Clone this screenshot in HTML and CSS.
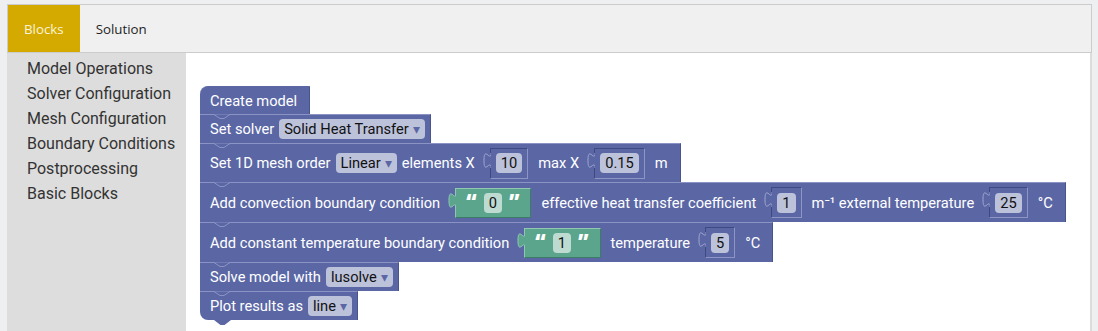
FILE: index.html
```html
<!DOCTYPE html>
<html>
<head>
<meta charset="utf-8">
<link rel="stylesheet" href="styles.css">
</head>
<body>
<div class="app">
  <div class="tabs">
    <div class="tab active">Blocks</div>
    <div class="tab">Solution</div>
  </div>
  <div class="main">
    <ul class="cats">
      <li>Model Operations</li>
      <li>Solver Configuration</li>
      <li>Mesh Configuration</li>
      <li>Boundary Conditions</li>
      <li>Postprocessing</li>
      <li>Basic Blocks</li>
    </ul>
    <div class="workspace">
      <div class="stack">
        <div class="block first h28"><span class="lbl end">Create model</span></div>

        <div class="block h29">
          <svg class="notch" width="18" height="6" viewBox="0 0 18 6"><polyline points="0,0.5 6,4.5 10,4.5 16,0.5"/></svg>
          <span class="lbl">Set solver</span>
          <span class="dd">Solid Heat Transfer<span class="arr">▾</span></span>
        </div>

        <div class="block h39">
          <svg class="notch" width="18" height="6" viewBox="0 0 18 6"><polyline points="0,0.5 6,4.5 10,4.5 16,0.5"/></svg>
          <span class="lbl">Set 1D mesh order</span>
          <span class="dd">Linear<span class="arr">▾</span></span>
          <span class="lbl">elements X</span>
          <span class="slot">
            <svg class="ptab" width="8" height="22" viewBox="0 0 8 22"><path d="M8,4 c0,10 -7,-8 -7,7.5 s7,-2.5 7,7.5"/></svg>
            <span class="box"><span class="num">10</span></span>
          </span>
          <span class="lbl">max X</span>
          <span class="slot">
            <svg class="ptab" width="8" height="22" viewBox="0 0 8 22"><path d="M8,4 c0,10 -7,-8 -7,7.5 s7,-2.5 7,7.5"/></svg>
            <span class="box"><span class="num">0.15</span></span>
          </span>
          <span class="lbl end">m</span>
        </div>

        <div class="block h40">
          <svg class="notch" width="18" height="6" viewBox="0 0 18 6"><polyline points="0,0.5 6,4.5 10,4.5 16,0.5"/></svg>
          <span class="lbl">Add convection boundary condition</span>
          <span class="slot green">
            <svg class="ptab" width="8" height="22" viewBox="0 0 8 22"><path d="M8,4 c0,10 -7,-8 -7,7.5 s7,-2.5 7,7.5"/></svg>
            <span class="str"><span class="q">“</span><span class="txt">0</span><span class="q">”</span></span>
          </span>
          <span class="lbl">effective heat transfer coefficient</span>
          <span class="slot">
            <svg class="ptab" width="8" height="22" viewBox="0 0 8 22"><path d="M8,4 c0,10 -7,-8 -7,7.5 s7,-2.5 7,7.5"/></svg>
            <span class="box"><span class="num">1</span></span>
          </span>
          <span class="lbl">m⁻¹ external temperature</span>
          <span class="slot">
            <svg class="ptab" width="8" height="22" viewBox="0 0 8 22"><path d="M8,4 c0,10 -7,-8 -7,7.5 s7,-2.5 7,7.5"/></svg>
            <span class="box"><span class="num">25</span></span>
          </span>
          <span class="lbl end">°C</span>
        </div>

        <div class="block h40">
          <svg class="notch" width="18" height="6" viewBox="0 0 18 6"><polyline points="0,0.5 6,4.5 10,4.5 16,0.5"/></svg>
          <span class="lbl">Add constant temperature boundary condition</span>
          <span class="slot green">
            <svg class="ptab" width="8" height="22" viewBox="0 0 8 22"><path d="M8,4 c0,10 -7,-8 -7,7.5 s7,-2.5 7,7.5"/></svg>
            <span class="str"><span class="q">“</span><span class="txt">1</span><span class="q">”</span></span>
          </span>
          <span class="lbl">temperature</span>
          <span class="slot">
            <svg class="ptab" width="8" height="22" viewBox="0 0 8 22"><path d="M8,4 c0,10 -7,-8 -7,7.5 s7,-2.5 7,7.5"/></svg>
            <span class="box"><span class="num">5</span></span>
          </span>
          <span class="lbl end">°C</span>
        </div>

        <div class="block h29">
          <svg class="notch" width="18" height="6" viewBox="0 0 18 6"><polyline points="0,0.5 6,4.5 10,4.5 16,0.5"/></svg>
          <span class="lbl">Solve model with</span>
          <span class="dd">lusolve<span class="arr">▾</span></span>
        </div>

        <div class="block h29 last">
          <svg class="notch" width="18" height="6" viewBox="0 0 18 6"><polyline points="0,0.5 6,4.5 10,4.5 16,0.5"/></svg>
          <span class="lbl">Plot results as</span>
          <span class="dd">line<span class="arr">▾</span></span>
        </div>
      </div>
    </div>
  </div>
</div>
</body>
</html>
```
FILE: styles.css
```css
* { box-sizing: border-box; }
html, body { margin: 0; padding: 0; }
body {
  background: #eeeff1;
  font-family: Roboto, "Liberation Sans", sans-serif;
  overflow: hidden;
}
.app {
  margin: 4px 6px 0 7px;
  height: 327px;
  display: flex;
  flex-direction: column;
}
.tabs {
  display: flex;
  height: 49px;
  background: #f0f0f0;
  border: 1px solid #cccccc;
  font-family: "Open Sans", sans-serif;
  font-size: 13.3px;
}
.tab {
  display: flex;
  align-items: center;
  padding: 0 16px;
  color: #1f1f1f;
}
.tab.active {
  background: #d4aa00;
  color: #f9f3dc;
}
.main {
  flex: 1;
  display: flex;
}
.cats {
  width: 179px;
  margin: 0;
  padding: 3px 0 0 20px;
  list-style: none;
  background: #dddddd;
  color: #333333;
  font-size: 16px;
  line-height: 25px;
}
.workspace {
  flex: 1;
  background: #ffffff;
  border-right: 2px solid #dcdcdc;
  padding: 33px 0 0 14px;
}
.stack {
  display: flex;
  flex-direction: column;
  align-items: flex-start;
}
.block {
  position: relative;
  display: flex;
  align-items: center;
  gap: 5px;
  background: #5b67a5;
  color: #ffffff;
  font-size: 14.67px;
  padding: 0 5px 0 10px;
  border-top: 1px solid #8a93c3;
  border-right: 1px solid #49538c;
  white-space: nowrap;
}
.h28 { height: 28px; }
.h29 { height: 29px; }
.h39 { height: 39px; }
.h40 { height: 40px; }
.block.first {
  border-top-left-radius: 8px;
  border-top-color: #5b67a5;
}
.block.last {
  border-bottom-left-radius: 8px;
}
.block.last::after {
  content: "";
  position: absolute;
  left: 14px;
  bottom: -5px;
  width: 17px;
  height: 5px;
  background: #5b67a5;
  clip-path: polygon(0 0, 100% 0, 62% 100%, 38% 100%);
}
.notch {
  position: absolute;
  top: -1px;
  left: 14px;
}
.notch polyline {
  fill: #5b67a5;
  stroke: #8a93c3;
  stroke-width: 1;
}
.lbl.end { margin-right: 7px; }
.dd {
  display: inline-flex;
  align-items: center;
  height: 20px;
  padding: 0 5px 0 5px;
  border-radius: 4px;
  background: #bdc2db;
  color: #111111;
}
.arr {
  color: #5b67a5;
  font-size: 14px;
  margin-left: 4px;
}
.slot {
  display: inline-flex;
  align-items: flex-start;
  margin: 0 5px 0 3px;
}
.ptab {
  margin-top: 1px;
  margin-right: -1px;
  flex: none;
  position: relative;
  z-index: 1;
}
.ptab path {
  fill: #5b67a5;
  stroke: #a3aad3;
  stroke-width: 1;
}
.box {
  display: inline-flex;
  align-items: center;
  height: 31px;
  padding: 0 5px 0 5px;
  background: #5b67a5;
  border: 1px solid;
  border-color: #3e4882 #8d95c4 #8d95c4 #3e4882;
}
.num {
  display: inline-flex;
  align-items: center;
  height: 20px;
  padding: 0 5px;
  border-radius: 4px;
  background: #bdc2db;
  color: #111111;
}
.slot.green .ptab path {
  fill: #5ba58c;
  stroke: #97cbb8;
}
.str {
  display: inline-flex;
  align-items: center;
  gap: 7px;
  height: 30px;
  padding: 0 11px 0 10px;
  background: #5ba58c;
  border: 1px solid;
  border-color: #8fc7b3 #3d7d67 #3d7d67 #8fc7b3;
}
.q {
  font-family: "Open Sans", sans-serif;
  font-weight: 800;
  font-size: 21px;
  line-height: 1;
  margin-top: -3px;
}
.txt {
  display: inline-flex;
  align-items: center;
  height: 20px;
  padding: 0 5px;
  border-radius: 4px;
  background: #bddbd1;
  color: #111111;
}
```
